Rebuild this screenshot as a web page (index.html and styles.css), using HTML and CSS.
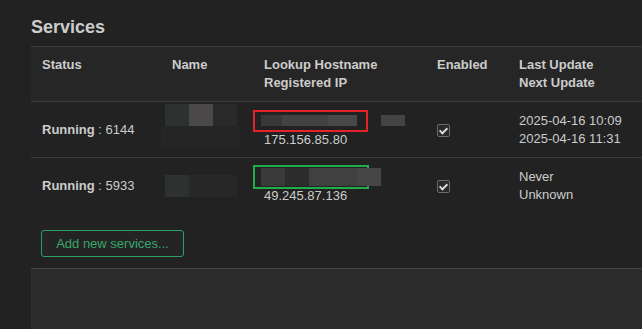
FILE: index.html
```html
<!DOCTYPE html>
<html lang="en">
<head>
  <meta charset="UTF-8">
  <meta name="viewport" content="width=device-width, initial-scale=1.0">
  <title>Services</title>
  <link rel="stylesheet" href="styles.css">
</head>
<body>
  <div class="main">
    <h2>Services</h2>
    <table class="services">
      <thead>
        <tr>
          <th class="col-status">Status</th>
          <th class="col-name">Name</th>
          <th class="col-host">Lookup Hostname<br>Registered IP</th>
          <th class="col-enabled">Enabled</th>
          <th>Last Update<br>Next Update</th>
        </tr>
      </thead>
      <tbody>
        <tr>
          <td><b>Running</b> : 6144</td>
          <td class="name-cell">
            <div class="blur blur-a">
              <span class="t t1"></span><span class="t t2"></span><span class="t t3"></span>
              <span class="t t4 wide"></span>
            </div>
          </td>
          <td>
            <div class="host">
              <span class="mark red"><span class="bar bar-a"></span></span>
              <span class="bar bar-side"></span>
            </div>
            <div>175.156.85.80</div>
          </td>
          <td><span class="check"></span></td>
          <td>2025-04-16 10:09<br>2025-04-16 11:31</td>
        </tr>
        <tr>
          <td><b>Running</b> : 5933</td>
          <td class="name-cell">
            <div class="blur blur-b">
              <span class="t t1"></span><span class="t t5"></span>
            </div>
          </td>
          <td>
            <div class="host">
              <span class="mark green"><span class="bar bar-b"></span></span>
            </div>
            <div>49.245.87.136</div>
          </td>
          <td><span class="check"></span></td>
          <td>Never<br>Unknown</td>
        </tr>
      </tbody>
    </table>
    <button class="add">Add new services...</button>
    <div class="panel"></div>
  </div>
</body>
</html>
```

FILE: styles.css
```css
body {
  margin: 0;
  background: #222222;
  color: #cccccc;
  font-family: 'Liberation Sans', Arial, sans-serif;
  font-size: 13px;
  overflow: hidden;
}

.main {
  margin-left: 31px;
}

h2 {
  margin: 0;
  padding-top: 15px;
  line-height: 24px;
  height: 31px;
  font-size: 18px;
  font-weight: bold;
  color: #cccccc;
}

.services {
  border-collapse: collapse;
  table-layout: fixed;
  width: 640px;
}

.services th,
.services td {
  text-align: left;
  vertical-align: middle;
  padding: 9px 11px;
  line-height: 18px;
}

.services thead tr {
  background: #262626;
  border-top: 1px solid #3c3c3c;
  border-bottom: 1px solid #3c3c3c;
}

.services th {
  font-weight: bold;
  vertical-align: top;
  height: 36px;
}

.services tbody td {
  padding: 8px 11px;
  height: 39px;
}

.services tbody tr:first-child {
  border-bottom: 1px solid #3c3c3c;
}

.col-status { width: 108px; }
.col-name { width: 70px; }
.col-host { width: 151px; }
.col-enabled { width: 60px; }

.blur {
  display: grid;
  margin-left: -7px;
  grid-template-columns: 24px 24px 24px;
}

.blur .t {
  height: 22px;
}

.blur-a {
  margin-top: -8px;
}

.t1 { background: #2e3132; }
.t2 { background: #4a4848; }
.t3 { background: #2a2a2a; }
.t5 { background: #272727; grid-column: span 2; }

.blur .wide {
  grid-column: span 3;
  background: #252525;
  margin-left: -4px;
  margin-right: -3px;
}

.host {
  display: flex;
  align-items: center;
  margin-left: -11px;
  height: 20px;
}

.mark {
  display: block;
  width: 105px;
  height: 16px;
  padding-left: 6px;
  padding-top: 2px;
}

.mark.red {
  border: 2px solid #e3232b;
}

.mark.green {
  border: 2px solid #21ac4b;
  width: 106px;
  height: 18px;
}

.bar {
  display: block;
  height: 11px;
}

.bar-a {
  width: 96px;
  margin-top: 1px;
  background: linear-gradient(90deg, #383838 0 22%, #424242 22% 70%, #484848 70%);
}

.bar-b {
  width: 120px;
  height: 18px;
  margin-top: -1px;
  background: linear-gradient(90deg, #3a3a3a 0 20%, #2c2c2c 20% 40%, #404040 40% 80%, #454545 80%);
}

.bar-side {
  width: 24px;
  margin-left: 13px;
  background: #444444;
}

.check {
  display: inline-block;
  position: relative;
  width: 11px;
  height: 11px;
  border: 1px solid #6a6a6a;
  border-radius: 2px;
  background: #2a2a2a;
  vertical-align: middle;
}

.check::after {
  content: "";
  position: absolute;
  left: 3px;
  top: 1px;
  width: 3px;
  height: 6px;
  border-right: 2px solid #dddddd;
  border-bottom: 2px solid #dddddd;
  transform: rotate(45deg);
}

.add {
  display: block;
  margin: 17px 0 0 10px;
  width: 143px;
  height: 27px;
  padding: 0;
  border: 1px solid #2f9e62;
  border-radius: 3px;
  background: #242424;
  color: #36a868;
  font-family: 'Liberation Sans', Arial, sans-serif;
  font-size: 13px;
}

.panel {
  margin-top: 11px;
  height: 60px;
  border-top: 1px solid #444444;
  background: #2c2c2c;
}
```
